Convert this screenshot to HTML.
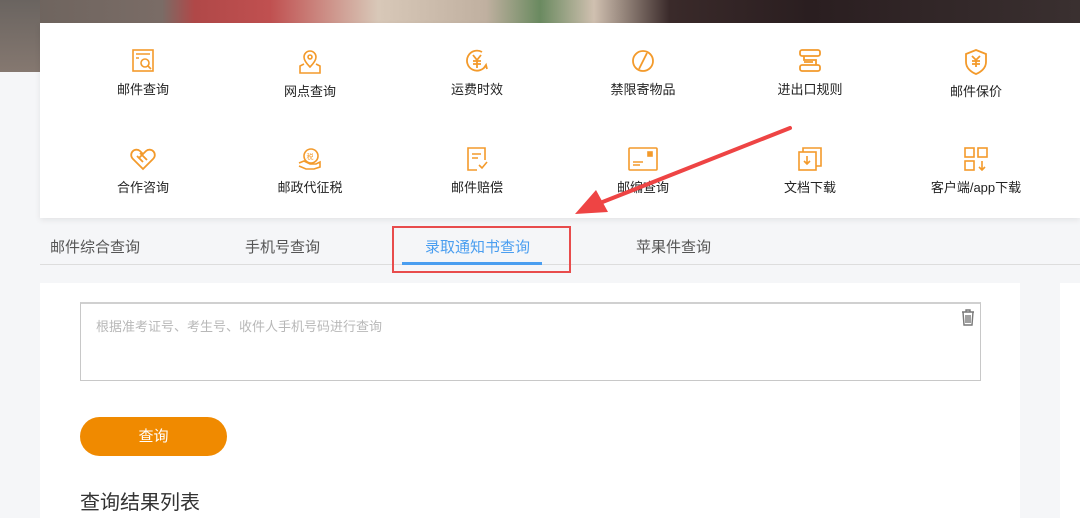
<!DOCTYPE html><html><head><meta charset="utf-8"><style>
*{margin:0;padding:0;box-sizing:border-box}
body{width:1080px;height:518px;overflow:hidden;background:#f5f6f8;font-family:"Liberation Sans","Noto Sans CJK SC",sans-serif;position:relative}
.photo{position:absolute;left:0;top:0;width:1080px;height:24px;background:linear-gradient(90deg,#6b625c 0%,#7a6c66 15%,#b04848 18%,#c05050 25%,#d8c8b8 35%,#c0b0a0 45%,#6a8a60 50%,#d0c0b0 55%,#3a2a2a 62%,#2a1e20 75%,#3a3030 100%)}
.lstrip{position:absolute;left:0;top:0;width:40px;height:72px;background:linear-gradient(#6a6460,#857870)}
.card{position:absolute;left:40px;top:23px;width:1040px;height:195px;background:#fff;box-shadow:0 2px 6px rgba(0,0,0,.08)}
.it{position:absolute;width:160px;text-align:center;font-size:13px;color:#222}
.it svg{display:block;margin:0 auto 6px}
.tabs{position:absolute;top:236px;font-size:15px;color:#555}
.line{position:absolute;left:40px;top:264px;width:1040px;height:1px;background:#ddd}
.panel{position:absolute;left:40px;top:283px;width:980px;height:235px;background:#fff}
.rp{position:absolute;left:1060px;top:283px;width:20px;height:235px;background:#fff}
.ta{position:absolute;left:80px;top:302px;width:901px;height:79px;border:1px solid #c8c8c8;border-top:2px solid #d0d0d0}
.ta span{position:absolute;left:15px;top:12px;font-size:13px;color:#b8b8b8}
.btn{position:absolute;left:80px;top:417px;width:147px;height:39px;border-radius:20px;background:#f08a00;color:#fff;font-size:15px;text-align:center;line-height:39px}
h2{position:absolute;left:80px;top:486px;font-size:20px;font-weight:normal;color:#333}
</style></head><body>
<div class="photo"></div><div class="lstrip"></div>
<div class="card">
<div class="it" style="left:23px;top:26px"><svg width="24" height="24" viewBox="0 0 24 24" fill="none" stroke="#f39a2b" stroke-width="1.6"><rect x="2" y="1" width="20" height="21"/><path d="M5 5h14M5 9h3"/><circle cx="14" cy="14" r="4"/><path d="M17 17l3 3"/></svg>邮件查询</div>
<div class="it" style="left:190px;top:26px"><svg width="24" height="26" viewBox="0 0 24 26" fill="none" stroke="#f39a2b" stroke-width="1.6"><path d="M12 18c-4-4-6-7-6-10a6 6 0 0112 0c0 3-2 6-6 10z"/><circle cx="12" cy="8" r="2"/><path d="M6 15l-4 2v7h20v-7l-4-2"/></svg>网点查询</div>
<div class="it" style="left:357px;top:26px"><svg width="24" height="24" viewBox="0 0 24 24" fill="none" stroke="#f39a2b" stroke-width="1.8"><path d="M21 16A10 10 0 1117 3"/><path d="M8 6l4 5 4-5M12 11v8M8 12h8M8 15h8M19 19l2-3 1 4"/></svg>运费时效</div>
<div class="it" style="left:523px;top:26px"><svg width="24" height="24" viewBox="0 0 24 24" fill="none" stroke="#f39a2b" stroke-width="1.8"><circle cx="12" cy="12" r="10"/><path d="M16 4L8 20"/></svg>禁限寄物品</div>
<div class="it" style="left:690px;top:26px"><svg width="24" height="24" viewBox="0 0 24 24" fill="none" stroke="#f39a2b" stroke-width="1.8"><rect x="2" y="1" width="20" height="6" rx="2"/><rect x="2" y="16" width="20" height="6" rx="2"/><path d="M6 7v4h12v5M6 13h9"/></svg>进出口规则</div>
<div class="it" style="left:856px;top:26px"><svg width="24" height="26" viewBox="0 0 24 26" fill="none" stroke="#f39a2b" stroke-width="1.8"><path d="M12 1l10 4v8c0 6-5 10-10 12C7 23 2 19 2 13V5z"/><path d="M8 7l4 4 4-4M12 11v7M8 12h8M8 15h8"/></svg>邮件保价</div>
<div class="it" style="left:23px;top:124px"><svg width="26" height="24" viewBox="0 0 26 24" fill="none" stroke="#f39a2b" stroke-width="1.8"><path d="M13 22L3 12a5 5 0 017-8l3 3 3-3a5 5 0 017 8z"/><path d="M7 9l6 6M10 6l7 7M13 7l-4 4"/></svg>合作咨询</div>
<div class="it" style="left:190px;top:124px"><svg width="24" height="24" viewBox="0 0 24 24" fill="none" stroke="#f39a2b" stroke-width="1.6"><circle cx="13" cy="9" r="7"/><text x="8.5" y="12" font-size="7" fill="#f39a2b" stroke="none">税</text><path d="M1 16l5-2 6 3h6l4-2v5l-6 2H8l-7-3"/></svg>邮政代征税</div>
<div class="it" style="left:357px;top:124px"><svg width="24" height="24" viewBox="0 0 24 24" fill="none" stroke="#f39a2b" stroke-width="1.6"><path d="M20 13V1H3v22h9"/><path d="M7 7h9M7 11h6M14 18l3 3 5-6"/></svg>邮件赔偿</div>
<div class="it" style="left:523px;top:124px"><svg width="30" height="24" viewBox="0 0 30 24" fill="none" stroke="#f39a2b" stroke-width="1.6"><rect x="1" y="1" width="28" height="22" rx="1"/><rect x="20" y="5" width="4" height="4" fill="#f39a2b"/><path d="M5 15h10M5 18h7"/></svg>邮编查询</div>
<div class="it" style="left:690px;top:124px"><svg width="24" height="24" viewBox="0 0 24 24" fill="none" stroke="#f39a2b" stroke-width="1.6"><rect x="1" y="5" width="17" height="18"/><path d="M5 5V1h18v18h-5M9 9v8M6 14l3 3 3-3"/></svg>文档下载</div>
<div class="it" style="left:856px;top:124px"><svg width="24" height="24" viewBox="0 0 24 24" fill="none" stroke="#f39a2b" stroke-width="1.6"><rect x="1" y="1" width="9" height="9"/><rect x="14" y="1" width="9" height="9"/><rect x="1" y="14" width="9" height="9"/><path d="M18 14v9M15 20l3 3 3-3"/></svg>客户端/app下载</div>
</div>
<div class="tabs" style="left:50px">邮件综合查询</div>
<div class="tabs" style="left:245px">手机号查询</div>
<div class="tabs" style="left:425px;color:#4a9ef0">录取通知书查询</div>
<div class="tabs" style="left:636px">苹果件查询</div>
<div class="line"></div>
<div style="position:absolute;left:402px;top:262px;width:140px;height:3px;background:#4a9ef0"></div>
<div style="position:absolute;left:392px;top:226px;width:179px;height:47px;border:2px solid #e84c4c"></div>
<div class="panel"></div><div class="rp"></div>
<div class="ta"><span>根据准考证号、考生号、收件人手机号码进行查询</span>
<svg style="position:absolute;right:5px;top:4px" width="14" height="18" viewBox="0 0 14 18" fill="none" stroke="#777" stroke-width="1.4"><path d="M1 4h12M5 4V2h4v2M2 4l1 13h8l1-13M5 7v8M7 7v8M9 7v8"/></svg></div>
<div class="btn">查询</div>
<h2>查询结果列表</h2>
<svg style="position:absolute;left:0;top:0" width="1080" height="518"><path d="M790 128L600 203" stroke="#ee4444" stroke-width="4" stroke-linecap="round"/><path d="M575 214L596 190L608 212Z" fill="#ee4444"/></svg>
</body></html>
